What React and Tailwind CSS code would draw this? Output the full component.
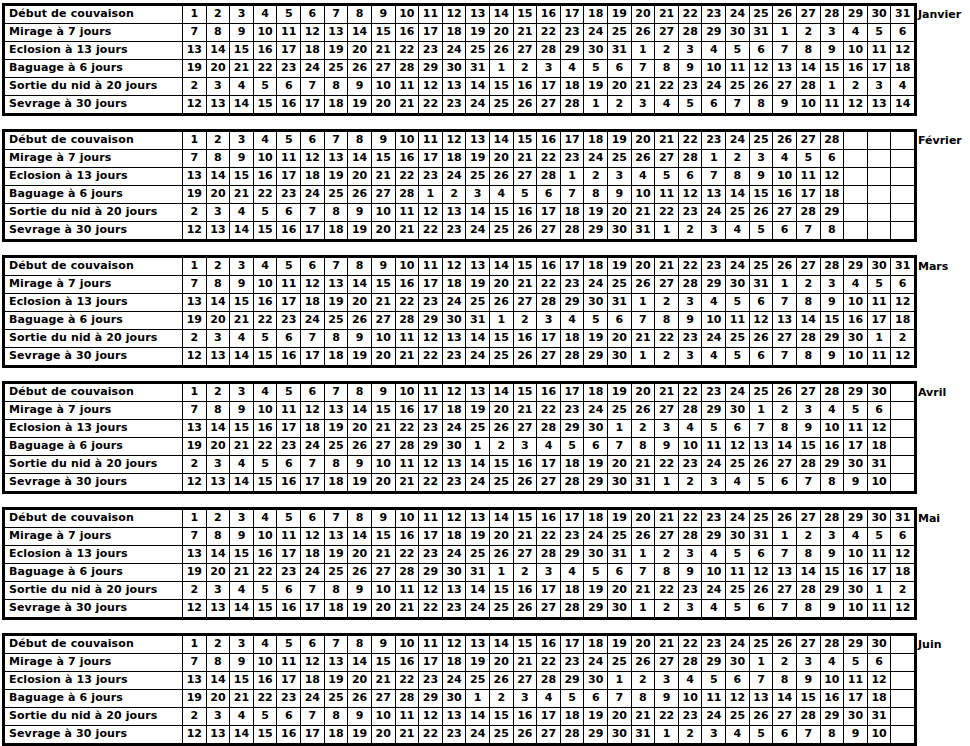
import React from "react";

const r = (a, b) => {
  const out = [];
  for (let i = a; i <= b; i++) out.push(i);
  return out;
};

const LABELS = [
  "Début de couvaison",
  "Mirage à 7 jours",
  "Eclosion à 13 jours",
  "Baguage à 6 jours",
  "Sortie du nid à 20 jours",
  "Sevrage à 30 jours",
];

const m31a = [
  r(1, 31),
  [...r(7, 31), ...r(1, 6)],
  [...r(13, 31), ...r(1, 12)],
  [...r(19, 31), ...r(1, 18)],
  [...r(2, 30), ...r(1, 2)],
  [...r(12, 30), ...r(1, 12)],
];

const m30 = [
  r(1, 30),
  [...r(7, 30), ...r(1, 6)],
  [...r(13, 30), ...r(1, 12)],
  [...r(19, 30), ...r(1, 18)],
  r(2, 31),
  [...r(12, 31), ...r(1, 10)],
];

const MONTHS = [
  {
    name: "Janvier",
    rows: [
      r(1, 31),
      [...r(7, 31), ...r(1, 6)],
      [...r(13, 31), ...r(1, 12)],
      [...r(19, 31), ...r(1, 18)],
      [...r(2, 28), ...r(1, 4)],
      [...r(12, 28), ...r(1, 14)],
    ],
  },
  {
    name: "Février",
    rows: [
      r(1, 28),
      [...r(7, 28), ...r(1, 6)],
      [...r(13, 28), ...r(1, 12)],
      [...r(19, 28), ...r(1, 18)],
      r(2, 29),
      [...r(12, 31), ...r(1, 8)],
    ],
  },
  { name: "Mars", rows: m31a },
  { name: "Avril", rows: m30 },
  { name: "Mai", rows: m31a },
  { name: "Juin", rows: m30 },
];

function MonthTable({ month }) {
  return (
    <div className="flex items-start">
      <div className="grid w-[915px] grid-cols-[177px_repeat(31,minmax(0,1fr))] gap-px border-[3px] border-black bg-black">
        {month.rows.map((row, ri) => (
          <React.Fragment key={ri}>
            <div className="flex h-[17px] items-center bg-white pl-[4px] tracking-[0.12px] whitespace-nowrap">
              {LABELS[ri]}
            </div>
            {Array.from({ length: 31 }).map((_, ci) => (
              <div
                key={ci}
                className="flex h-[17px] items-center justify-center bg-white"
              >
                {row[ci] ?? ""}
              </div>
            ))}
          </React.Fragment>
        ))}
      </div>
      <div className="pl-[1px] pt-[5px] leading-[13px]">{month.name}</div>
    </div>
  );
}

export default function App() {
  return (
    <div className="flex min-h-[746px] w-[970px] flex-col gap-[13px] bg-white pl-[2px] pt-[3px] font-['DejaVu_Sans',Verdana,sans-serif] text-[11px] font-bold text-black">
      {MONTHS.map((m) => (
        <MonthTable key={m.name} month={m} />
      ))}
    </div>
  );
}
